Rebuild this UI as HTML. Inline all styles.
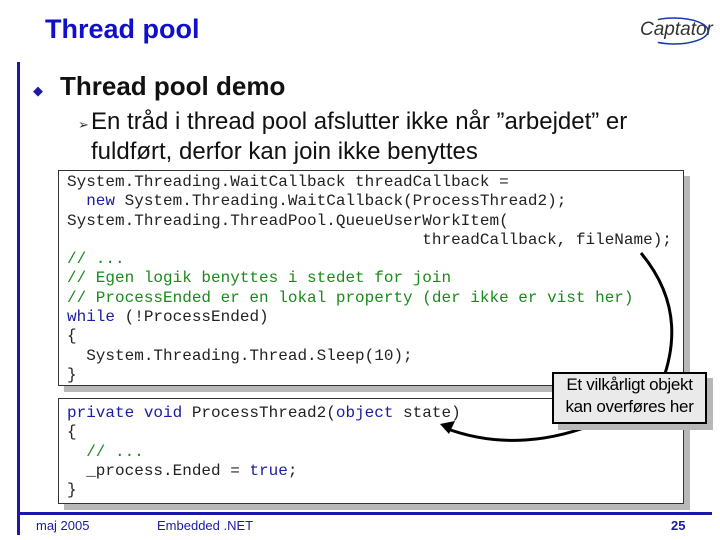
<!DOCTYPE html>
<html><head><style>
body{margin:0;width:720px;height:540px;background:#fff;position:relative;overflow:hidden;font-family:"Liberation Sans",sans-serif}
.a{position:absolute}
pre{margin:0;font-family:"Liberation Mono",monospace;font-size:16px;line-height:19.3px;color:#222}
.k{color:#1a1aa6}.c{color:#1a8a1a}
.box{position:absolute;background:#fff;border:1px solid #333;box-shadow:6px 6px 0 #b8b8b8}
</style></head><body>
<div class="a" style="left:45px;top:14px;font-size:27px;font-weight:bold;color:#1010c8">Thread pool</div>
<div class="a" style="left:640px;top:19px;font-size:19px;font-style:italic;color:#333">Captator</div>
<svg class="a" style="left:634px;top:12px" width="80" height="36"><ellipse cx="40" cy="19" rx="34" ry="13" fill="none" stroke="#1a3aa6" stroke-width="1.5" stroke-dasharray="55 45"/></svg>
<div class="a" style="left:17px;top:62px;width:3px;height:473px;background:#1a1aa6"></div>
<div class="a" style="left:20px;top:512px;width:692px;height:3px;background:#1a1aa6"></div>
<div class="a" style="left:33px;top:83px;font-size:13px;color:#1a1aa6">◆</div>
<div class="a" style="left:60px;top:71px;font-size:26px;font-weight:bold;color:#111">Thread pool demo</div>
<div class="a" style="left:78px;top:117px;font-size:13px;color:#333">➢</div>
<div class="a" style="left:91px;top:107px;font-size:24px;line-height:30px;color:#111">En tråd i thread pool afslutter ikke når ”arbejdet” er<br>fuldført, derfor kan join ikke benyttes</div>
<div class="box" style="left:58px;top:170px;width:624px;height:214px"></div>
<pre class="a" style="left:67px;top:173px">System.Threading.WaitCallback threadCallback =
  <span class="k">new</span> System.Threading.WaitCallback(ProcessThread2);
System.Threading.ThreadPool.QueueUserWorkItem(
                                     threadCallback, fileName);
<span class="c">// ...
// Egen logik benyttes i stedet for join
// ProcessEnded er en lokal property (der ikke er vist her)</span>
<span class="k">while</span> (!ProcessEnded)
{
  System.Threading.Thread.Sleep(10);
}</pre>
<div class="box" style="left:58px;top:398px;width:624px;height:104px"></div>
<pre class="a" style="left:67px;top:404px"><span class="k">private void</span> ProcessThread2(<span class="k">object</span> state)
{
  <span class="c">// ...</span>
  _process.Ended = <span class="k">true</span>;
}</pre>
<svg class="a" style="left:0;top:0" width="720" height="540"><path d="M641 253 C680 300 680 350 652 405" fill="none" stroke="#000" stroke-width="3"/><path d="M592 425 C540 445 490 445 445 428" fill="none" stroke="#000" stroke-width="3"/><polygon points="440,424 455,421 449,434" fill="#000"/></svg>
<div class="a" style="left:552px;top:372px;width:151px;height:48px;background:#eaeaea;border:2px solid #000;box-shadow:6px 6px 0 #b8b8b8;font-size:17px;line-height:22px;text-align:center;color:#000;letter-spacing:-0.3px">Et vilkårligt objekt<br>kan overføres her</div>
<div class="a" style="left:36px;top:518px;font-size:13px;color:#1a1aa6">maj 2005</div>
<div class="a" style="left:157px;top:518px;font-size:13px;color:#1a1aa6">Embedded .NET</div>
<div class="a" style="left:671px;top:518px;font-size:13px;font-weight:bold;color:#1a1aa6">25</div>
</body></html>
